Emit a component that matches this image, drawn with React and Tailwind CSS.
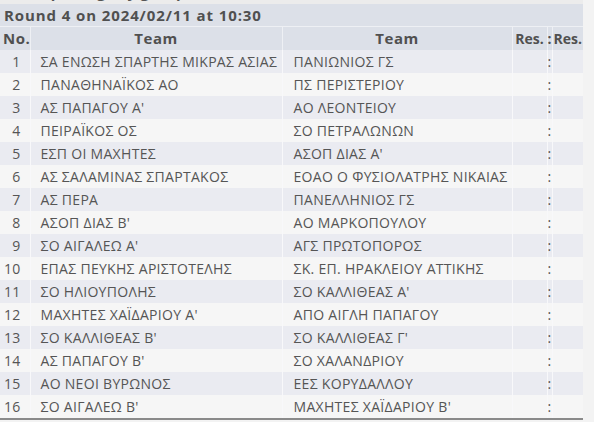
const rows = [
  ["ΣΑ ΕΝΩΣΗ ΣΠΑΡΤΗΣ ΜΙΚΡΑΣ ΑΣΙΑΣ", "ΠΑΝΙΩΝΙΟΣ ΓΣ"],
  ["ΠΑΝΑΘΗΝΑΪΚΟΣ ΑΟ", "ΠΣ ΠΕΡΙΣΤΕΡΙΟΥ"],
  ["ΑΣ ΠΑΠΑΓΟΥ Α'", "ΑΟ ΛΕΟΝΤΕΙΟΥ"],
  ["ΠΕΙΡΑΪΚΟΣ ΟΣ", "ΣΟ ΠΕΤΡΑΛΩΝΩΝ"],
  ["ΕΣΠ ΟΙ ΜΑΧΗΤΕΣ", "ΑΣΟΠ ΔΙΑΣ Α'"],
  ["ΑΣ ΣΑΛΑΜΙΝΑΣ ΣΠΑΡΤΑΚΟΣ", "ΕΟΑΟ Ο ΦΥΣΙΟΛΑΤΡΗΣ ΝΙΚΑΙΑΣ"],
  ["ΑΣ ΠΕΡΑ", "ΠΑΝΕΛΛΗΝΙΟΣ ΓΣ"],
  ["ΑΣΟΠ ΔΙΑΣ Β'", "ΑΟ ΜΑΡΚΟΠΟΥΛΟΥ"],
  ["ΣΟ ΑΙΓΑΛΕΩ Α'", "ΑΓΣ ΠΡΩΤΟΠΟΡΟΣ"],
  ["ΕΠΑΣ ΠΕΥΚΗΣ ΑΡΙΣΤΟΤΕΛΗΣ", "ΣΚ. ΕΠ. ΗΡΑΚΛΕΙΟΥ ΑΤΤΙΚΗΣ"],
  ["ΣΟ ΗΛΙΟΥΠΟΛΗΣ", "ΣΟ ΚΑΛΛΙΘΕΑΣ Α'"],
  ["ΜΑΧΗΤΕΣ ΧΑΪΔΑΡΙΟΥ Α'", "ΑΠΟ ΑΙΓΛΗ ΠΑΠΑΓΟΥ"],
  ["ΣΟ ΚΑΛΛΙΘΕΑΣ Β'", "ΣΟ ΚΑΛΛΙΘΕΑΣ Γ'"],
  ["ΑΣ ΠΑΠΑΓΟΥ Β'", "ΣΟ ΧΑΛΑΝΔΡΙΟΥ"],
  ["ΑΟ ΝΕΟΙ ΒΥΡΩΝΟΣ", "ΕΕΣ ΚΟΡΥΔΑΛΛΟΥ"],
  ["ΣΟ ΑΙΓΑΛΕΩ Β'", "ΜΑΧΗΤΕΣ ΧΑΪΔΑΡΙΟΥ Β'"],
];

export default function App() {
  return (
    <div className="h-[422px] w-[594px] overflow-hidden bg-[#f3f3f3] font-['Open_Sans',sans-serif] text-[14px] tracking-[0.3px] text-[#555]">
      <div className="h-[4px] w-[583px] overflow-hidden bg-[#ececec]">
        <div className="-mt-[17px] pl-[4px] text-[15px] leading-[18px] font-bold">
          Team pairings by group
        </div>
      </div>
      <div className="w-[583px] border-b-2 border-[#8a8a8a]">
        <div className="flex h-[22px] items-center bg-[#dce0e8] pl-[4px] text-[15px] font-bold tracking-[0.9px] text-[#505050]">
          Round 4 on 2024/02/11 at 10:30
        </div>
        <table className="w-full table-fixed border-collapse">
          <colgroup>
            <col className="w-[30px]" />
            <col className="w-[252px]" />
            <col className="w-[230px]" />
            <col className="w-[35px]" />
            <col className="w-[5px]" />
            <col className="w-[31px]" />
          </colgroup>
          <thead>
            <tr className="h-[22px] border-t border-[#eef0f4] bg-[#dce0e8] text-[15px] font-bold tracking-[0.5px] text-[#505050]">
              <th className="px-[3px] text-left">No.</th>
              <th className="border-l border-[#eef0f4] text-center">Team</th>
              <th className="border-l border-[#eef0f4] text-center">Team</th>
              <th className="border-l border-[#eef0f4] text-center text-[14px] tracking-normal">Res.</th>
              <th className="border-l border-[#eef0f4] text-center text-[14px] tracking-normal">:</th>
              <th className="border-l border-[#eef0f4] text-center text-[14px] tracking-normal">Res.</th>
            </tr>
          </thead>
          <tbody>
            {rows.map((r, i) => (
              <tr
                key={i}
                className={
                  "h-[23px] " + (i % 2 === 0 ? "bg-[#eaebf1]" : "bg-[#f6f6f6]")
                }
              >
                <td className="pr-[9px] text-right">{i + 1}</td>
                <td className="border-l border-[#f8f8fa] pl-[10px] whitespace-nowrap">{r[0]}</td>
                <td className="border-l border-[#f8f8fa] pl-[11px] whitespace-nowrap">{r[1]}</td>
                <td className="border-l border-[#f8f8fa]"></td>
                <td className="border-l border-[#f8f8fa] text-center">:</td>
                <td className="border-l border-[#f8f8fa]"></td>
              </tr>
            ))}
          </tbody>
        </table>
      </div>
    </div>
  );
}
